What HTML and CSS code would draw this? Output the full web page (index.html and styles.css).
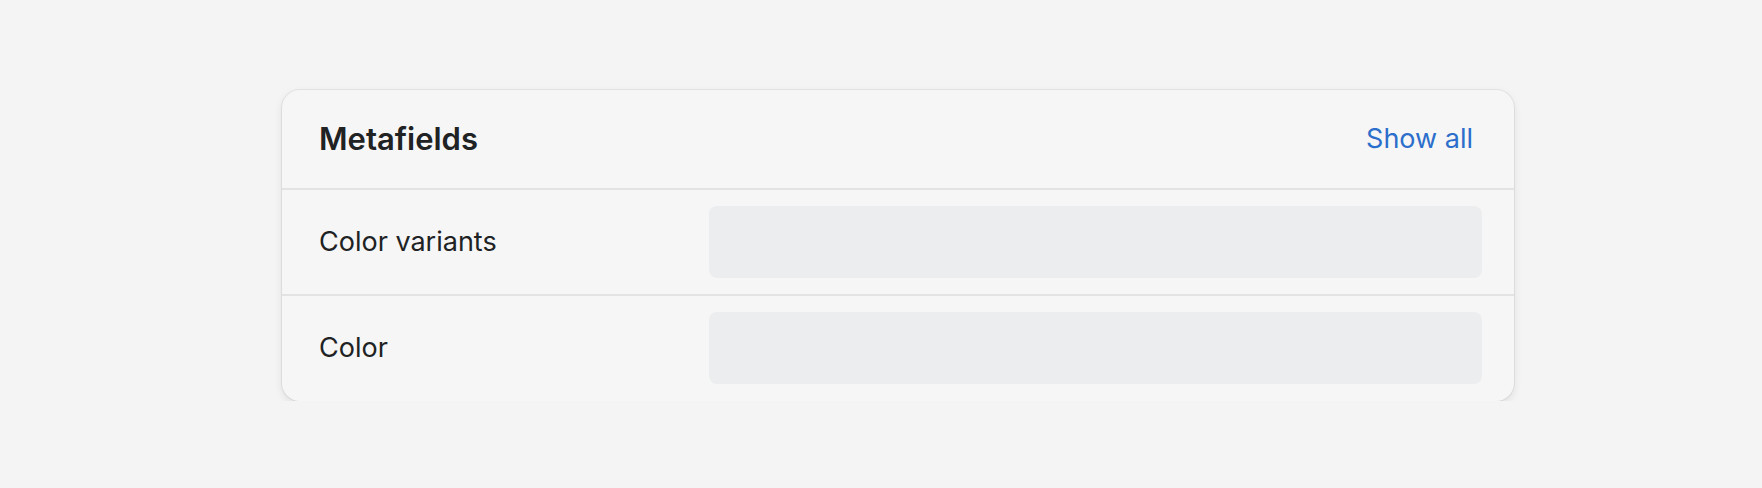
FILE: index.html
```html
<!DOCTYPE html>
<html lang="en">
<head>
<meta charset="utf-8">
<title>Metafields</title>
<link rel="stylesheet" href="styles.css">
</head>
<body>
<main class="page">
  <section class="card">
    <header class="card-header">
      <h2 class="card-title">Metafields</h2>
      <a class="card-link" href="#">Show all</a>
    </header>
    <div class="row">
      <span class="row-label">Color variants</span>
      <div class="field"></div>
    </div>
    <div class="row">
      <span class="row-label">Color</span>
      <div class="field"></div>
    </div>
  </section>
</main>
</body>
</html>
```

FILE: styles.css
```css
html, body {
  margin: 0;
  padding: 0;
  background: #f4f4f4;
  font-family: Inter, "Noto Sans", "Liberation Sans", sans-serif;
  color: #202223;
}

.page {
  padding: 90px 0 0 282px;
}

.card {
  width: 1232px;
  background: #f6f6f6;
  border-radius: 18px;
  box-shadow: 0 0 0 1px rgba(0, 0, 0, 0.06), 0 3px 8px rgba(0, 0, 0, 0.09);
  overflow: hidden;
}

.card-header {
  height: 100px;
  box-sizing: border-box;
  padding: 0 41px 0 37px;
  display: flex;
  align-items: center;
  justify-content: space-between;
  border-bottom: 2px solid #e3e3e3;
}

.card-title {
  margin: 0;
  font-size: 31px;
  font-weight: 600;
  line-height: 40px;
  color: #202223;
}

.card-link {
  font-size: 27px;
  line-height: 36px;
  color: #2c6ecb;
  text-decoration: none;
}

.row {
  display: grid;
  grid-template-columns: 390px 1fr;
  align-items: center;
  padding: 16px 32px 16px 37px;
}

.row + .row {
  border-top: 2px solid #e3e3e3;
  padding-bottom: 17px;
}

.row-label {
  font-size: 27px;
  line-height: 36px;
  color: #202223;
}

.field {
  height: 72px;
  background: #ecedee;
  border-radius: 8px;
}
```
